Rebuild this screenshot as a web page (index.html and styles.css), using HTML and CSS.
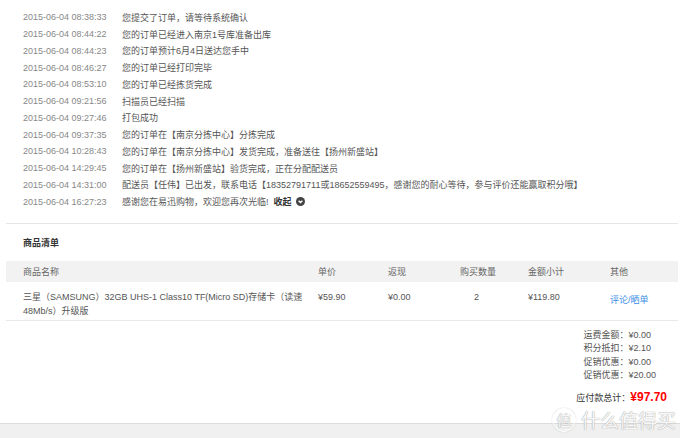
FILE: index.html
```html
<!DOCTYPE html>
<html lang="zh-CN">
<head>
    <meta charset="UTF-8">
    <meta name="viewport" content="width=device-width, initial-scale=1.0">
    <title>订单详情</title>
    <link rel="stylesheet" href="styles.css">
</head>
<body>
    <div class="page">
        <!-- 订单跟踪 -->
        <ul class="track-list">
            <li><span class="time">2015-06-04 08:38:33</span><span class="msg">您提交了订单，请等待系统确认</span></li>
            <li><span class="time">2015-06-04 08:44:22</span><span class="msg">您的订单已经进入南京1号库准备出库</span></li>
            <li><span class="time">2015-06-04 08:44:23</span><span class="msg">您的订单预计6月4日送达您手中</span></li>
            <li><span class="time">2015-06-04 08:46:27</span><span class="msg">您的订单已经打印完毕</span></li>
            <li><span class="time">2015-06-04 08:53:10</span><span class="msg">您的订单已经拣货完成</span></li>
            <li><span class="time">2015-06-04 09:21:56</span><span class="msg">扫描员已经扫描</span></li>
            <li><span class="time">2015-06-04 09:27:46</span><span class="msg">打包成功</span></li>
            <li><span class="time">2015-06-04 09:37:35</span><span class="msg">您的订单在【南京分拣中心】分拣完成</span></li>
            <li><span class="time">2015-06-04 10:28:43</span><span class="msg">您的订单在【南京分拣中心】发货完成，准备送往【扬州新盛站】</span></li>
            <li><span class="time">2015-06-04 14:29:45</span><span class="msg">您的订单在【扬州新盛站】验货完成，正在分配配送员</span></li>
            <li><span class="time">2015-06-04 14:31:00</span><span class="msg">配送员【任伟】已出发，联系电话【18352791711或18652559495，感谢您的耐心等待，参与评价还能赢取积分哦】</span></li>
            <li>
                <span class="time">2015-06-04 16:27:23</span>
                <span class="msg">感谢您在易迅购物，欢迎您再次光临!</span>
                <a class="toggle" href="#">收起
                    <svg width="9" height="9" viewBox="0 0 9 9"><circle cx="4.5" cy="4.5" r="4.5" fill="#444"/><path d="M2.6 3.7 L4.5 5.6 L6.4 3.7" fill="none" stroke="#fff" stroke-width="1.4"/></svg>
                </a>
            </li>
        </ul>

        <!-- 商品清单 -->
        <div class="goods">
            <h3 class="goods-title">商品清单</h3>
            <div class="goods-table">
                <div class="goods-row goods-head">
                    <div>商品名称</div>
                    <div>单价</div>
                    <div>返现</div>
                    <div>购买数量</div>
                    <div>金额小计</div>
                    <div>其他</div>
                </div>
                <div class="goods-row goods-item">
                    <div class="name">三星（SAMSUNG）32GB UHS-1 Class10 TF(Micro SD)存储卡（读速48Mb/s）升级版</div>
                    <div>¥59.90</div>
                    <div>¥0.00</div>
                    <div class="qty">2</div>
                    <div>¥119.80</div>
                    <div class="ops"><a href="#">评论/晒单</a></div>
                </div>
            </div>

            <div class="summary">
                <div class="summary-list">
                    <div>运费金额：¥0.00</div>
                    <div>积分抵扣：¥2.10</div>
                    <div>促销优惠：¥0.00</div>
                    <div>促销优惠：¥20.00</div>
                </div>
                <div class="total">应付款总计：<span class="total-num">¥97.70</span></div>
            </div>
        </div>

        <div class="footer-bar"></div>

        <div class="watermark"><span class="wm-circle">值</span>什么值得买</div>
    </div>
</body>
</html>
```

FILE: styles.css
```css
* {
    box-sizing: border-box;
}
body {
    margin: 0;
    padding: 0;
    font-family: "Liberation Sans", "Noto Sans CJK SC", sans-serif;
    font-size: 9px;
    color: #555;
    background: #fff;
}
a {
    text-decoration: none;
}
.page {
    position: relative;
    width: 680px;
    height: 438px;
    overflow: hidden;
}
.track-list {
    list-style: none;
    margin: 0 2px 0 6px;
    padding: 9px 0 13px 17px;
    border-bottom: 1px solid #e6e6e6;
}
.track-list li {
    display: flex;
    align-items: center;
    height: 16.75px;
    white-space: nowrap;
}
.time {
    width: 99px;
    color: #888;
}
.msg {
    color: #555;
}
.toggle {
    display: flex;
    align-items: center;
    gap: 4px;
    margin-left: 5px;
    color: #333;
    font-weight: bold;
}
.goods-title {
    margin: 11px 0 10px 23px;
    font-size: 9px;
    line-height: 16px;
    color: #333;
}
.goods-table {
    margin: 0 2px 0 6px;
}
.goods-row {
    display: grid;
    grid-template-columns: 312px 70px 72px 68px 82px 68px;
}
.goods-row > div:first-child {
    padding-left: 17px;
}
.goods-head {
    height: 21px;
    align-items: center;
    background: #f2f2f2;
    color: #666;
}
.goods-item {
    height: 39px;
    padding-top: 8px;
    line-height: 14px;
    border-bottom: 1px solid #e8e8e8;
    color: #555;
}
.goods-item .name {
    padding-right: 8px;
}
.qty {
    padding-left: 14px;
}
.ops {
    padding-top: 3px;
}
.ops a {
    color: #3b8de6;
}
.summary {
    display: flex;
    flex-direction: column;
    align-items: flex-end;
    padding-top: 8px;
}
.summary-list {
    padding-right: 24px;
    line-height: 13.3px;
}
.total {
    margin-top: 7px;
    padding-right: 13px;
    line-height: 16px;
    color: #333;
}
.total-num {
    color: #f00;
    font-size: 12px;
    font-weight: bold;
}
.footer-bar {
    margin-top: 17px;
    height: 15px;
    background: #f0f0f0;
    border-top: 1px solid #dcdcdc;
}
.watermark {
    position: absolute;
    right: 4px;
    bottom: 5px;
    display: flex;
    align-items: center;
    gap: 5px;
    font-size: 19px;
    color: rgba(255, 255, 255, 0.92);
    text-shadow: 0 0 1px #aaa, 0 0 1px #aaa;
    letter-spacing: 0;
}
.wm-circle {
    display: inline-flex;
    align-items: center;
    justify-content: center;
    width: 24px;
    height: 24px;
    border-radius: 50%;
    border: 1.5px solid rgba(255, 255, 255, 0.92);
    box-shadow: 0 0 1px #aaa;
    font-size: 15px;
}
```
